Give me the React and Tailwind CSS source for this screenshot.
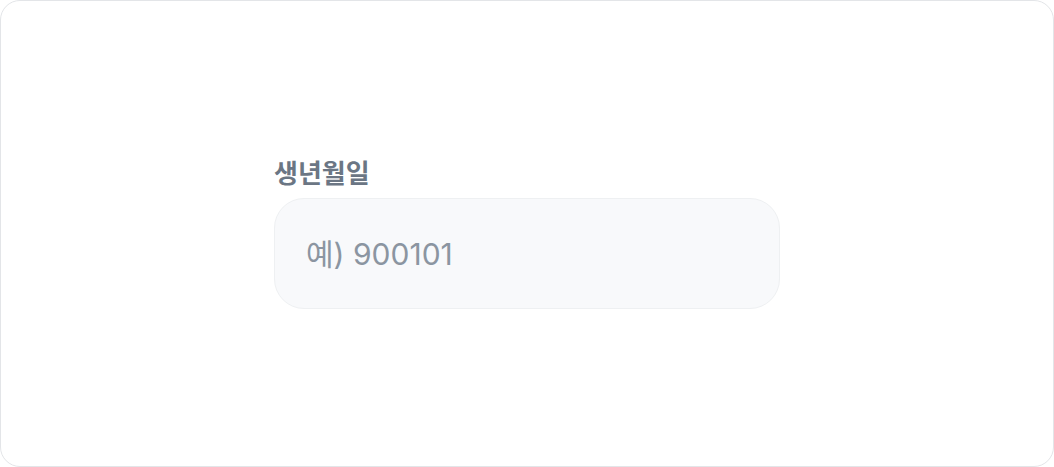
export default function App() {
  return (
    <div
      className="flex h-[467px] w-[1054px] items-center justify-center rounded-[20px] border border-[#e3e5e8] bg-white"
      style={{ fontFamily: '"Inter", "Noto Sans CJK KR", sans-serif' }}
    >
      <div className="flex w-[506px] flex-col gap-2">
        <label className="text-[26px] font-bold leading-[32px] text-[#6b7684]">
          생년월일
        </label>
        <input
          type="text"
          placeholder="예) 900101"
          className="h-[111px] w-full rounded-[30px] border border-[#eef0f2] bg-[#f8f9fb] px-[31px] text-[30px] text-[#333d4b] outline-none placeholder:text-[#8b95a1]"
        />
      </div>
    </div>
  );
}
